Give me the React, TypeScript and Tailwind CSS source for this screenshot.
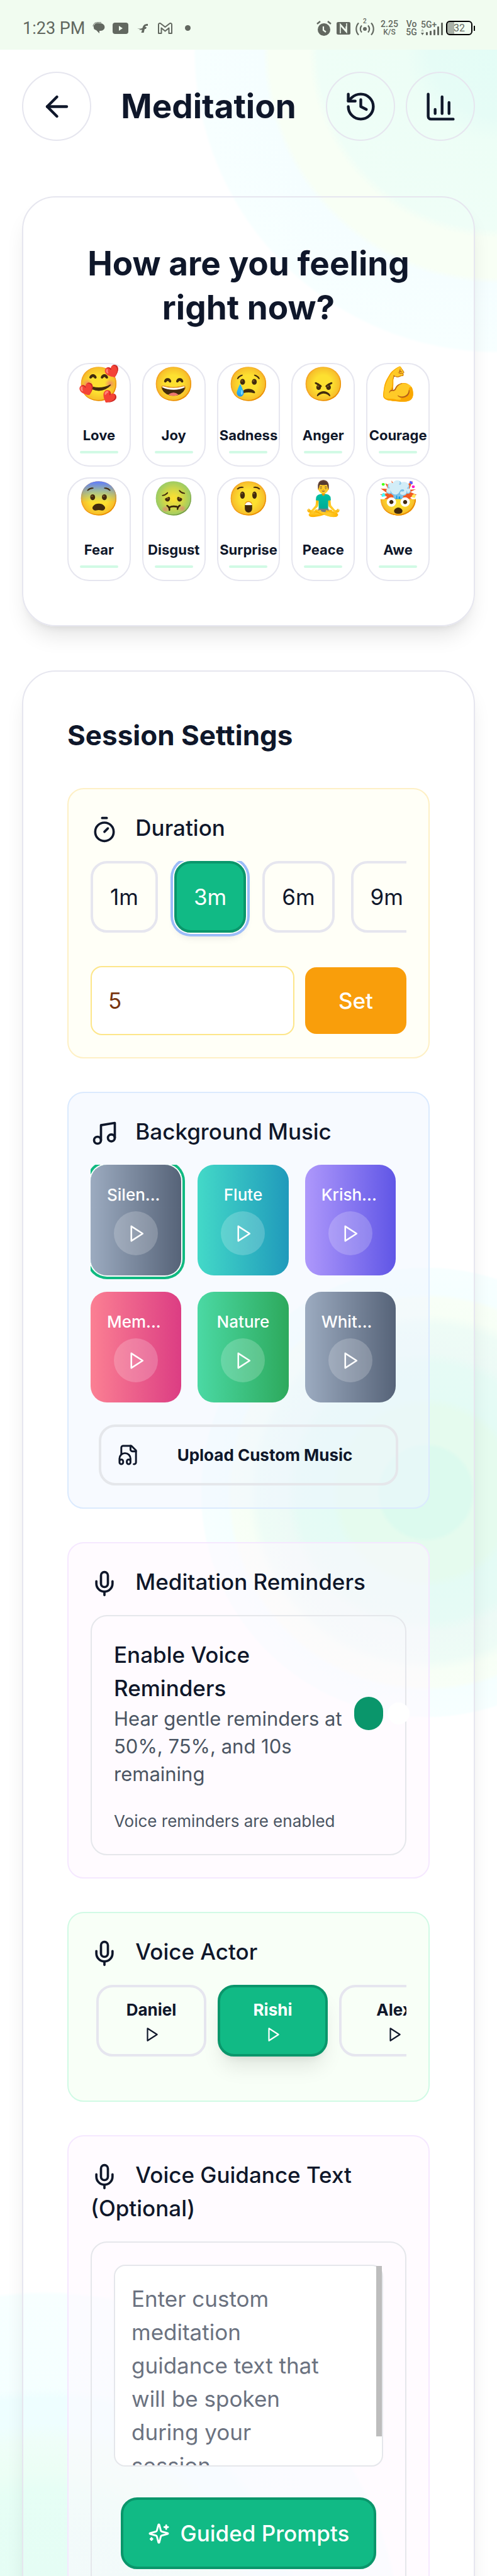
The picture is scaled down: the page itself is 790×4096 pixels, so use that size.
import React, { useState } from 'react';
import { ArrowLeft, ChartColumn, History, Mic, Music, Timer } from 'lucide-react';

const emotions = [
  { emoji: '🥰', label: 'Love' },
  { emoji: '😄', label: 'Joy' },
  { emoji: '😢', label: 'Sadness' },
  { emoji: '😠', label: 'Anger' },
  { emoji: '💪', label: 'Courage' },
  { emoji: '😨', label: 'Fear' },
  { emoji: '🤢', label: 'Disgust' },
  { emoji: '😲', label: 'Surprise' },
  { emoji: '🧘‍♂️', label: 'Peace' },
  { emoji: '🤯', label: 'Awe' },
];

const durations = ['1m', '3m', '6m', '9m'];

const tracks = [
  { name: 'Silen...', align: 'text-left', gradient: 'from-[#9cabc0] to-[#566378]' },
  { name: 'Flute', align: 'text-center', gradient: 'from-[#43d9c8] to-[#209abb]' },
  { name: 'Krish...', align: 'text-left', gradient: 'from-[#ae98fb] to-[#6056e6]' },
  { name: 'Mem...', align: 'text-left', gradient: 'from-[#fb8093] to-[#dc3d83]' },
  { name: 'Nature', align: 'text-center', gradient: 'from-[#4bd9a4] to-[#2da95c]' },
  { name: 'Whit...', align: 'text-left', gradient: 'from-[#9cabc0] to-[#566378]' },
];

const voices = ['Daniel', 'Rishi', 'Alex'];

const PlayIcon = ({ className }: { className: string }) => (
  <svg viewBox="0 0 24 24" fill="none" stroke="currentColor" strokeWidth="2" strokeLinecap="round" strokeLinejoin="round" className={className}>
    <polygon points="6 3 20 12 6 21 6 3" />
  </svg>
);

const StatusBar = () => (
  <div className="relative flex h-[79px] items-center justify-between bg-[#f1fcf0] pt-[10px] pr-[35px] pl-[36px] font-['Roboto',sans-serif] text-[#626860]">
    <div className="flex items-center">
      <span className="text-[27px] leading-8">1:23 PM</span>
      <svg viewBox="0 0 20 19" className="ml-3 h-[19px] w-5">
        <path d="M2 9C1 3 6 1 11 2h2c9 1 8 12 0 12h-2v4l-5-5C3 12 2 11 2 9z" fill="currentColor" />
        <path d="M1 7C1 3 4 .7 8 .7h6" fill="none" stroke="currentColor" strokeWidth="1" />
      </svg>
      <svg viewBox="0 0 25 18" className="ml-3 h-[18px] w-[25px]">
        <rect width="25" height="18" rx="4" fill="currentColor" />
        <path d="M10 5l6 4-6 4z" fill="#f1fcf0" />
      </svg>
      <svg viewBox="0 0 17 14" className="ml-3.5 h-3.5 w-[17px]">
        <path d="M17 0v3h-2.500c-1 0-1.500 1-1.800 2H15l-1 3h-2l-1.500 6H6.500L8 9.500H3l2-1-5-1h6l2.500-1C9.500 2 12 0 17 0z" fill="currentColor" />
      </svg>
      <svg viewBox="0 0 23 18" className="ml-4 h-[18px] w-[23px]">
        <path d="M1 3c0-2 2-2.600 3.500-1.500L11.500 7l7-5.500C20 .4 22 1 22 3v14h-4.500V8.500l-6 5-6-5V17H1z" fill="none" stroke="currentColor" strokeWidth="2" strokeLinejoin="round" />
      </svg>
      <span className="ml-5 size-[9px] rounded-full bg-current" />
    </div>
    <div className="flex items-center font-medium">
      <svg viewBox="0 0 24 24" className="size-6">
        <circle cx="12" cy="14" r="10" fill="currentColor" />
        <path d="M1 5l5-4M23 5l-5-4" stroke="currentColor" strokeWidth="2.500" />
        <path d="M11 9v6l4 3" fill="none" stroke="#f1fcf0" strokeWidth="2.200" />
      </svg>
      <svg viewBox="0 0 22 20" className="ml-2 h-5 w-[22px]">
        <rect width="22" height="20" rx="2.500" fill="currentColor" />
        <path d="M6 18V3.500l9 10V7M16 2v14.500l-9-10" fill="none" stroke="#f1fcf0" strokeWidth="1.600" />
      </svg>
      <div className="relative ml-2">
        <svg viewBox="0 0 30 24" className="h-6 w-[30px]" fill="none" stroke="currentColor" strokeWidth="2.200">
          <circle cx="15" cy="13" r="3" fill="currentColor" stroke="none" />
          <path d="M10 7.500a8 8 0 0 0 0 11M20 7.500a8 8 0 0 1 0 11M5 3.500a14 14 0 0 0 0 19M25 3.500a14 14 0 0 1 0 19" />
        </svg>
        <span className="absolute -top-1 left-3 text-[10px] leading-[10px]">2</span>
      </div>
      <div className="ml-2 flex w-8 flex-col items-center leading-[13px]">
        <span className="text-[14px]">2.25</span>
        <span className="text-[12px]">K/S</span>
      </div>
      <div className="ml-2.5 flex w-[18px] flex-col items-center text-[14px] leading-[13px]">
        <span>Vo</span>
        <span>5G</span>
      </div>
      <div className="relative ml-1.5 h-6 w-[36px]">
        <span className="block text-[14px] leading-[13px]">5G+</span>
        <svg viewBox="0 0 36 24" className="absolute inset-0 h-6 w-9" fill="currentColor">
          <path d="M0 19h5l-2.500 4z" />
          <path d="M0 17h5l-2.500-4z" opacity=".4" />
          <rect x="8" y="18" width="3" height="5" rx="1" />
          <rect x="14" y="16" width="3" height="7" rx="1" />
          <rect x="20" y="14" width="3" height="9" rx="1" />
          <rect x="26" y="9" width="3" height="14" rx="1" />
          <rect x="32" y="3" width="3" height="20" rx="1" />
        </svg>
      </div>
      <div className="ml-1 flex items-center">
        <div className="flex h-[23px] w-[42px] items-center justify-center rounded-md border-2 border-black bg-linear-to-r from-[#a9b1a7] from-30% to-transparent to-30% text-[16px] font-normal">32</div>
        <span className="ml-0.5 h-2 w-0.5 bg-black" />
      </div>
    </div>
  </div>
);

const Background = () => (
  <div className="absolute inset-0 overflow-hidden" aria-hidden="true">
    <div className="absolute -top-[404px] -right-[483px] size-[966px] rounded-full bg-[radial-gradient(closest-side,#e4fdf6_0%,#e6fcf6_22%,#edfef6_30%,#effef7_59%,#f8fff5_62%,#f8fff5_75%,#f5feff_77%,#f7ffff_99%,transparent_100%)]" />
    <div className="absolute top-[2014px] -right-[246px] size-[718px] rounded-full bg-[radial-gradient(closest-side,#dcfaee_0%,#dcfaee_20%,#e5fbee_22%,#e5fbee_38%,#e4fbf5_42%,#e6fbf5_57%,#edfaf6_62%,#eefcf6_74%,#f7fff6_79%,#f8fff7_86%,#f5ffff_88%,#f7ffff_99%,transparent_100%)]" />
    <div className="absolute top-[3643px] -left-[494px] size-[1134px] rounded-full bg-[radial-gradient(closest-side,#e4fcf4_0%,#e6fef5_44%,#ecfef5_50%,#effef8_58%,#eefeff_63%,#eefeff_70%,#f5ffff_73%,#f7ffff_99%,transparent_100%)]" />
  </div>
);

const SectionLabel = ({ icon: Icon, children }: { icon: React.ElementType; children: React.ReactNode }) => (
  <h3 className="mb-[26px] text-[35px] leading-[53px] font-medium">
    <Icon className="mr-[18px] inline-block size-11 align-middle" /> {children}
  </h3>
);

export default function App() {
  const [duration, setDuration] = useState('3m');
  const [voice, setVoice] = useState('Rishi');
  const [reminders, setReminders] = useState(true);

  return (
    <div className="relative h-screen overflow-hidden bg-white font-['Inter',sans-serif] text-[#0f172a]">
      <Background />
      <StatusBar />

      <div className="relative px-[35px] pt-[35px]">
        {/* Header */}
        <header className="mb-[88px] flex items-center justify-between">
          <button aria-label="Back" className="flex size-[110px] items-center justify-center rounded-full border-2 border-[#e6e6ef]">
            <ArrowLeft className="size-[53px]" />
          </button>
          <h1 className="text-[53px] leading-[70px] font-bold">Meditation</h1>
          <div className="flex gap-[17px]">
            <button aria-label="History" className="flex size-[110px] items-center justify-center rounded-full border-2 border-[#e6e6ef]">
              <History className="size-[53px]" />
            </button>
            <button aria-label="Statistics" className="flex size-[110px] items-center justify-center rounded-full border-2 border-[#e6e6ef]">
              <ChartColumn className="size-[53px]" />
            </button>
          </div>
        </header>

        {/* Emotions */}
        <section className="mb-[70px] rounded-[53px] border-2 border-[#e6e6ef] p-[70px] shadow-[0_22px_33px_-7px_rgba(0,0,0,0.1),0_9px_13px_-9px_rgba(0,0,0,0.1)]">
          <h2 className="mb-[53px] text-center text-[53px] leading-[70px] font-bold">How are you feeling right now?</h2>
          <div className="grid grid-cols-5 gap-x-[18px] gap-y-[17px]">
            {emotions.map((e) => (
              <button key={e.label} className="flex h-[165px] flex-col items-center rounded-[35px] border-2 border-[#e6e6ef]">
                <span className="h-[97px] text-[53px] leading-[62px]">{e.emoji}</span>
                <span className="text-[22px] leading-[33px] font-bold">{e.label}</span>
                <span className="mt-2 h-1 w-[61px] rounded-sm bg-[#d1fae5]" />
              </button>
            ))}
          </div>
        </section>

        {/* Session settings */}
        <section className="rounded-[53px] border-2 border-[#e6e6ef] p-[70px] shadow-[0_22px_33px_-7px_rgba(0,0,0,0.1),0_9px_13px_-9px_rgba(0,0,0,0.1)]">
          <h2 className="mb-[53px] text-[44px] leading-[62px] font-bold">Session Settings</h2>

          <div className="flex flex-col gap-[53px]">
            <div className="rounded-[26px] border-2 border-[#fef0c5] bg-[#ffffef]/50 p-[35px]">
              <SectionLabel icon={Timer}>Duration</SectionLabel>
              <div className="mb-[26px] flex gap-[26px] overflow-hidden pb-[27px]">
                {durations.map((d) => (
                  <button
                    key={d}
                    onClick={() => setDuration(d)}
                    className={`h-[114px] shrink-0 rounded-[26px] border-4 px-[27px] text-[35px] leading-[53px] ${
                      duration === d
                        ? 'border-[#0a966b] bg-[#11ba85] text-white shadow-[0_0_0_2px_#fff,0_0_0_6px_#9bbcf8,0_9px_13px_-2px_rgba(0,0,0,0.1)]'
                        : 'border-[#e6e6ef]'
                    }`}
                  >
                    {d}
                  </button>
                ))}
              </div>
              <div className="flex items-center gap-[17px]">
                <input
                  aria-label="Custom minutes"
                  defaultValue="5"
                  className="h-[110px] min-w-0 flex-1 rounded-[18px] border-2 border-[#fde68a] bg-white px-[26px] text-[35px] text-[#78350f]"
                />
                <button className="h-[106px] w-[161px] rounded-[18px] bg-[#f99e0b] text-[35px] font-medium text-white">Set</button>
              </div>
            </div>

            <div className="rounded-[26px] border-2 border-[#dbeafe] bg-[#eff6ff]/50 p-[35px]">
              <SectionLabel icon={Music}>Background Music</SectionLabel>
              <div className="mb-[27px] grid grid-cols-3 gap-[26px] overflow-hidden pr-[17px] pb-2">
                {tracks.map((t, i) => (
                  <div
                    key={t.name}
                    className={`flex h-[176px] flex-col items-center rounded-[26px] bg-linear-to-r/srgb px-[26px] pt-[30px] text-white ${t.gradient} ${
                      i === 0 ? 'shadow-[0_0_0_2px_#fff,0_0_0_6px_#10b981]' : ''
                    }`}
                  >
                    <span className={`w-full text-[26px] leading-[35px] font-medium ${t.align}`}>{t.name}</span>
                    <button aria-label="Preview" className="mt-[9px] flex size-[70px] items-center justify-center rounded-full bg-white/20">
                      <PlayIcon className="size-[31px]" />
                    </button>
                  </div>
                ))}
              </div>
              <button className="mx-auto flex h-[97px] w-[95%] items-center gap-[17px] rounded-[26px] border-4 border-[#e5e7eb] px-[26px] text-[26px] font-bold">
                <svg viewBox="0 0 24 24" fill="none" stroke="currentColor" strokeWidth="2" strokeLinecap="round" strokeLinejoin="round" className="size-[35px]">
                  <path d="M4 11V4a2 2 0 0 1 2-2h9l5 5v13a2 2 0 0 1-2 2h-.5" />
                  <path d="M14 2v4a2 2 0 0 0 2 2h4" />
                  <path d="M2 19a2 2 0 1 1 4 0v1a2 2 0 1 1-4 0v-4a6 6 0 0 1 12 0v4a2 2 0 1 1-4 0v-1a2 2 0 1 1 4 0" />
                </svg>
                <span className="flex-1 text-center">Upload Custom Music</span>
              </button>
            </div>

            <div className="rounded-[26px] border-2 border-[#f5e8ff] bg-[#fff7ff]/50 p-[35px]">
              <SectionLabel icon={Mic}>Meditation Reminders</SectionLabel>
              <div className="rounded-[26px] border-2 border-[#e5e7eb] p-[35px]">
                <div className="mb-[35px] flex items-center gap-[17px]">
                  <label htmlFor="reminders" className="flex-1">
                    <span className="block text-[35px] leading-[53px] font-medium">Enable Voice Reminders</span>
                    <span className="block text-[31px] leading-[44px] text-[#4b5563]">Hear gentle reminders at 50%, 75%, and 10s remaining</span>
                  </label>
                  <span className="relative h-[53px] w-[46px]">
                    <input
                      id="reminders"
                      type="checkbox"
                      checked={reminders}
                      onChange={() => setReminders(!reminders)}
                      className="block h-[53px] w-[46px] appearance-none rounded-full bg-gray-300 checked:bg-[#0a966b]"
                    />
                    <span className="pointer-events-none absolute top-[9px] left-[53px] size-[35px] rounded-full bg-white" />
                  </span>
                </div>
                <p className="text-[26px] leading-[35px] text-[#4b5563]">Voice reminders are enabled</p>
              </div>
            </div>

            <div className="rounded-[26px] border-2 border-[#d1fae5] bg-[#f1ffef]/50 p-[35px] pb-0">
              <SectionLabel icon={Mic}>Voice Actor</SectionLabel>
              <div className="flex gap-[18px] overflow-hidden pb-[70px] pl-[9px]">
                {voices.map((v) => (
                  <button
                    key={v}
                    onClick={() => setVoice(v)}
                    className={`flex h-[114px] w-[175px] shrink-0 flex-col items-center justify-center gap-[9px] rounded-[26px] border-4 text-[26px] leading-[35px] font-bold ${
                      voice === v
                        ? 'border-[#0a966b] bg-[#11ba85] text-white shadow-[0_22px_33px_-7px_rgba(0,0,0,0.1),0_9px_13px_-9px_rgba(0,0,0,0.1)]'
                        : 'border-[#e6e6ef]'
                    }`}
                  >
                    {v}
                    <PlayIcon className="size-[26px]" />
                  </button>
                ))}
              </div>
            </div>

            <div className="rounded-[26px] border-2 border-[#f5e8ff] bg-[#fff7ff]/50 p-[35px]">
              <SectionLabel icon={Mic}>Voice Guidance Text (Optional)</SectionLabel>
              <div className="rounded-[26px] border-2 border-[#e5e7eb] p-[35px]">
                <div className="relative mb-[49px]">
                  <textarea
                    aria-label="Voice guidance text"
                    placeholder="Enter custom meditation guidance text that will be spoken during your session..."
                    className="block h-[321px] w-full resize-none overflow-hidden rounded-[18px] border-2 border-[#e5e7eb] bg-white py-[26px] pr-[79px] pl-[26px] text-[35px] leading-[53px] placeholder:text-[#6b7280]"
                  />
                  <span className="absolute top-0.5 right-0.5 h-[271px] w-[9px] bg-[#bdbdbd]" />
                </div>
                <button className="mx-auto flex h-[114px] w-[95%] items-center justify-center gap-[17px] rounded-[26px] border-4 border-[#0a966b] bg-[#11ba85] text-[35px] font-medium text-white">
                  <svg viewBox="0 0 24 24" fill="none" stroke="currentColor" strokeWidth="2" strokeLinecap="round" strokeLinejoin="round" className="size-[35px]">
                    <path d="M9.937 15.5A2 2 0 0 0 8.5 14.063l-6.135-1.582a.5.5 0 0 1 0-.962L8.5 9.936A2 2 0 0 0 9.937 8.5l1.582-6.135a.5.5 0 0 1 .963 0L14.063 8.5A2 2 0 0 0 15.5 9.937l6.135 1.581a.5.5 0 0 1 0 .964L15.5 14.063a2 2 0 0 0-1.437 1.437l-1.582 6.135a.5.5 0 0 1-.963 0z" />
                    <path d="M20 3v4M22 5h-4M4 17v2M5 18H3" />
                  </svg>
                  Guided Prompts
                </button>
              </div>
            </div>
          </div>
        </section>
      </div>
    </div>
  );
}
